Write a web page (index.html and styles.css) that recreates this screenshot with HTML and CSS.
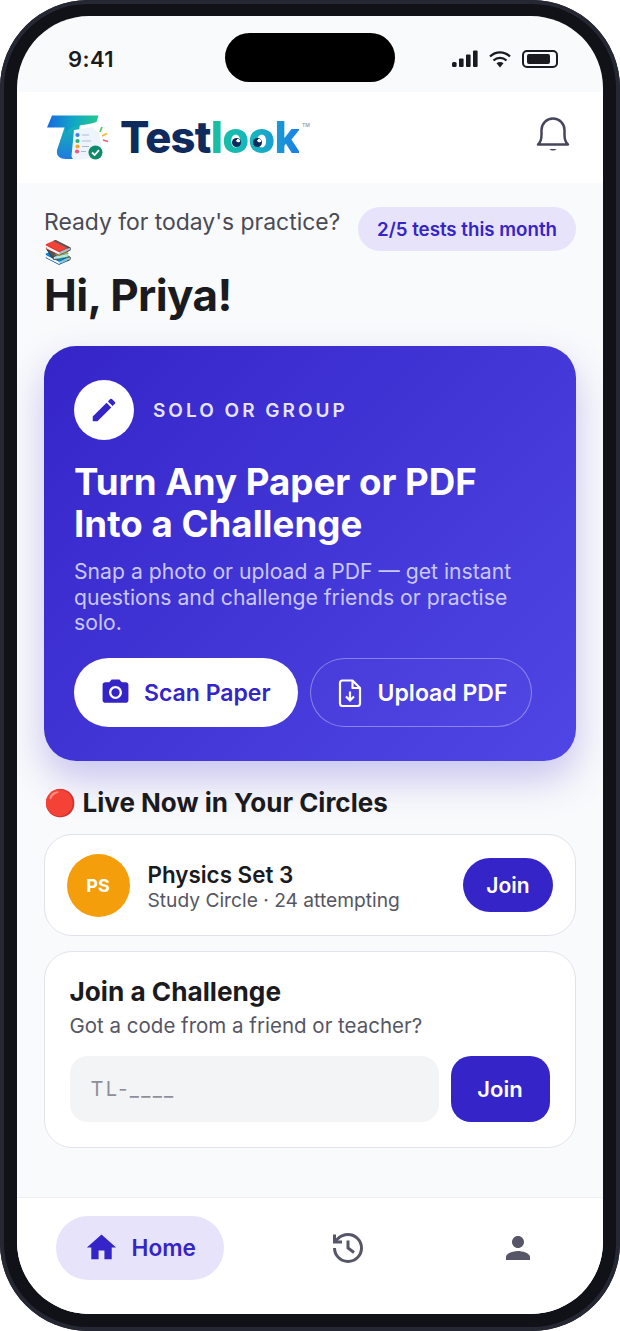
FILE: index.html
```html
<!DOCTYPE html>
<html lang="en">
<head>
<meta charset="utf-8">
<title>Testlook</title>
<link rel="stylesheet" href="styles.css">
</head>
<body>
<div class="phone">
  <div class="screen">
    <div class="island"></div>
    <div class="status">
      <span class="time">9:41</span>
      <div class="status-icons">
        <svg class="signal" viewBox="0 0 26 18"><rect x="0" y="12" width="4.6" height="5" rx="1.5"/><rect x="7" y="8.500" width="4.600" height="8.500" rx="1"/><rect x="14" y="4.500" width="4.600" height="12.500" rx="1"/><rect x="21" y="0.500" width="4.600" height="16.500" rx="1"/></svg>
        <svg class="wifi" viewBox="0 0 22 18"><path d="M1 6.500C6.800 1 15.200 1 21 6.500M4.500 10.500C8.300 7 13.700 7 17.500 10.500" fill="none" stroke="#1a1a1f" stroke-width="2.300"/><path d="M7.500 13.300 11 17.500l3.500-4.200c-2-1.700-5-1.700-7 0z" fill="#1a1a1f"/></svg>
        <div class="battery"><div class="battery-fill"></div></div>
      </div>
    </div>
    <header class="topbar">
      <div class="logo">
        <svg class="logo-mark" viewBox="46 114 66 48">
          <defs>
            <linearGradient id="tg" x1="0" y1="0" x2="1" y2="0"><stop offset="0" stop-color="#1769e0"/><stop offset=".5" stop-color="#12a5c8"/><stop offset="1" stop-color="#22c98c"/></linearGradient>
            <linearGradient id="sg" x1="0" y1="0" x2="0" y2="1"><stop offset="0" stop-color="#14b8b0"/><stop offset="1" stop-color="#1f7ae0"/></linearGradient>
          </defs>
          <path d="M65 126 57 150C56 156 60 159 66 159H75L80 124Z" fill="url(#sg)"/>
          <path d="M52 115.500H98.500L96.500 122C90 124.500 82 125 76 126 71 127 68 130 66 134L65 127.500H47Z" fill="url(#tg)"/>
          <path d="M74 130 92 127 99 133 102 151 100 157 76 160C73 160 72 158 71.500 156Z" fill="#eef4fc"/>
          <circle cx="77.500" cy="135" r="2.100" fill="#3b82e6"/><circle cx="77.500" cy="141" r="2.100" fill="#22b573"/><circle cx="77.500" cy="146.500" r="2.100" fill="#f5a623"/><circle cx="77" cy="151.500" r="2.100" fill="#ec5a7c"/>
          <path d="M82 135h7M82 141h9M82 146.500h7M81 151.500h5" stroke="#a9b9d3" stroke-width="1.200"/>
          <circle cx="95.500" cy="152.500" r="7" fill="#0d8a6a"/>
          <path d="M92 152.500l2.600 2.500 4.400-4.800" fill="none" stroke="#fff" stroke-width="1.800"/>
          <path d="M100 132l2-5" stroke="#58c46b" stroke-width="1.800"/><path d="M102 136l5-2.500" stroke="#f6b52e" stroke-width="1.800"/><path d="M103 140l5 1.500" stroke="#ef5b7a" stroke-width="1.800"/>
        </svg>
        <div class="wordmark"><span class="word-dark">Test</span><span class="word-grad">look</span><span class="eye eye-a"></span><span class="eye eye-b"></span><span class="tm">TM</span></div>
      </div>
      <svg class="bell" viewBox="0 0 36 38"><path d="M3 27.500c2.500-2 3.500-4.500 3.500-10V13a11.500 11.500 0 0 1 23 0v4.500c0 5.500 1 8 3.500 10z" fill="none" stroke="#46465a" stroke-width="2.500" stroke-linejoin="round"/><path d="M14.500 32a4 3 0 0 0 7 0z" fill="#46465a"/></svg>
    </header>
    <main class="content">
      <section class="greeting">
        <div class="greeting-text">
          <p class="ready">Ready for today's practice? <span class="emoji">📚</span></p>
          <h1 class="hello">Hi, Priya!</h1>
        </div>
        <span class="quota">2/5 tests this month</span>
      </section>
      <section class="hero">
        <div class="hero-top">
          <span class="hero-badge"><svg class="ico-pencil" viewBox="0 0 24 24"><path d="M3 17.250V21h3.750L17.810 9.940l-3.750-3.750L3 17.250zM20.710 7.040a1 1 0 0 0 0-1.410l-2.340-2.340a1 1 0 0 0-1.410 0l-1.830 1.830 3.750 3.750 1.830-1.830z"/></svg></span>
          <span class="eyebrow">SOLO OR GROUP</span>
        </div>
        <h2 class="hero-title">Turn Any Paper or PDF Into a Challenge</h2>
        <p class="hero-sub">Snap a photo or upload a PDF — get instant questions and challenge friends or practise solo.</p>
        <div class="hero-actions">
          <button class="btn btn-white"><svg class="ico-cam" viewBox="0 0 24 24"><path d="M12 15.200a3.200 3.200 0 1 0 0-6.400 3.200 3.200 0 0 0 0 6.400z"/><path d="M9 2 7.170 4H4c-1.100 0-2 .9-2 2v12c0 1.100.9 2 2 2h16c1.100 0 2-.9 2-2V6c0-1.100-.9-2-2-2h-3.170L15 2H9zm3 15c-2.760 0-5-2.240-5-5s2.240-5 5-5 5 2.240 5 5-2.240 5-5 5z"/></svg>Scan Paper</button>
          <button class="btn btn-ghost"><svg class="ico-file" viewBox="0 0 24 28"><path d="M4 1.500h10.500L22 9v15.500a2.500 2.500 0 0 1-2.500 2.500h-15A2.500 2.500 0 0 1 2 24.500V4A2.500 2.500 0 0 1 4 1.500zM14.500 1.500V9H22" fill="none" stroke="#fff" stroke-width="2.200" stroke-linejoin="round"/><path d="M12 12.500v8.500M8 17.500l4 4 4-4" fill="none" stroke="#fff" stroke-width="2.200"/></svg>Upload PDF</button>
        </div>
      </section>
      <h3 class="section-title"><span class="emoji">🔴</span> Live Now in Your Circles</h3>
      <section class="card live-card">
        <span class="avatar">PS</span>
        <div class="live-info">
          <div class="live-name">Physics Set 3</div>
          <div class="live-meta">Study Circle · 24 attempting</div>
        </div>
        <button class="join-small">Join</button>
      </section>
      <section class="card code-card">
        <div class="code-title">Join a Challenge</div>
        <div class="code-sub">Got a code from a friend or teacher?</div>
        <div class="code-row">
          <div class="code-input">TL-____</div>
          <button class="join-big">Join</button>
        </div>
      </section>
    </main>
    <nav class="tabbar">
      <div class="tab tab-active"><svg class="ico-home" viewBox="0 0 24 24"><path d="M10 20v-6h4v6h5v-8h3L12 3 2 12h3v8z"/></svg>Home</div>
      <div class="tab"><svg class="ico-nav" viewBox="0 0 24 24"><path d="M3 12a9 9 0 1 0 9-9 9.750 9.750 0 0 0-6.740 2.740L3 8" fill="none" stroke="#575668" stroke-width="2"/><path d="M3 3v5h5" fill="none" stroke="#575668" stroke-width="2"/><path d="M12 7v5l4 3" fill="none" stroke="#575668" stroke-width="2"/></svg></div>
      <div class="tab"><svg class="ico-nav" viewBox="0 0 24 24"><path fill="#575668" d="M12 12c2.210 0 4-1.790 4-4s-1.790-4-4-4-4 1.790-4 4 1.790 4 4 4zm0 2c-2.670 0-8 1.340-8 4v2h16v-2c0-2.660-5.330-4-8-4z"/></svg></div>
    </nav>
  </div>
</div>
</body>
</html>
```

FILE: styles.css
```css
* { box-sizing: border-box; }
html, body { margin: 0; padding: 0; background: #fff; }
body { font-family: Inter, "Noto Sans", sans-serif; width: 620px; height: 1331px; overflow: hidden; }
p, h1, h2, h3 { margin: 0; }
button { font-family: inherit; border: 0; cursor: pointer; }
svg { display: block; flex-shrink: 0; }

.phone {
  width: 620px; height: 1331px;
  background: #101218;
  border-radius: 88px;
  padding: 16px 17px 17px;
  box-shadow: inset 0 0 0 4px #252833;
}
.screen {
  position: relative;
  height: 100%;
  background: #f9fafc;
  border-radius: 72px;
  overflow: hidden;
  display: flex;
  flex-direction: column;
}
.island {
  position: absolute; left: 208px; top: 17px;
  width: 170px; height: 49px;
  background: #000; border-radius: 25px;
}
.status {
  height: 76px;
  padding: 9px 45px 0 51px;
  display: flex; align-items: center; justify-content: space-between;
  flex-shrink: 0;
}
.time { font-size: 22px; font-weight: 600; color: #1a1a1f; letter-spacing: .4px; }
.status-icons { display: flex; align-items: center; gap: 11px; }
.signal { width: 26px; height: 18px; fill: #1a1a1f; }
.wifi { width: 22px; height: 18px; }
.battery { width: 36px; height: 18px; border: 2px solid #1a1a1f; border-radius: 5px; padding: 2px 6px 2px 3px; }
.battery-fill { height: 100%; background: #1a1a1f; border-radius: 2px; }

.topbar {
  height: 91px; background: #fff; flex-shrink: 0;
  padding: 0 32px 0 29px;
  display: flex; align-items: center; justify-content: space-between;
}
.logo { display: flex; align-items: center; gap: 8px; }
.logo-mark { width: 66px; height: 48px; }
.wordmark { position: relative; margin-top: -2px; font-weight: 800; font-size: 43.5px; line-height: 48px; letter-spacing: -.8px; }
.word-dark { color: #0f2a5c; }
.word-grad { background: linear-gradient(90deg, #16c1a0 0%, #18b4c0 50%, #1a7fe8 100%); -webkit-background-clip: text; background-clip: text; color: transparent; }
.eye { position: absolute; width: 9px; height: 9px; border-radius: 50%; background: radial-gradient(circle at 68% 30%, #fff 0 18%, #0f2a5c 22%); top: 25px; }
.eye-a { left: 112px; }
.eye-b { left: 133px; }
.tm { position: absolute; left: 182px; top: 9px; font-size: 5px; line-height: 6px; font-weight: 500; color: #8a93a6; letter-spacing: 0; }
.bell { width: 36px; height: 38px; margin-top: -3px; }

.content { flex: 1; padding: 24px 27px 0; }
.greeting { display: flex; align-items: flex-start; gap: 14px; }
.greeting-text { flex: 1; min-width: 0; }
.ready { font-size: 22.9px; line-height: 30px; color: #4a4a55; }
.emoji { font-family: "Noto Color Emoji", sans-serif; }
.hello { font-size: 44px; line-height: 54px; font-weight: 700; color: #1a1a1f; letter-spacing: -.6px; }
.quota {
  flex-shrink: 0; height: 44px; padding: 0 19px;
  display: flex; align-items: center;
  background: #e7e3fa; color: #3525c8;
  border-radius: 22px; font-size: 18.7px; font-weight: 600;
}

.hero {
  margin-top: 24px;
  height: 415px;
  padding: 34px 30px;
  border-radius: 32px;
  background: linear-gradient(135deg, #3525c8 0%, #4f46e5 100%);
  box-shadow: 0 18px 38px rgba(53, 37, 200, .25);
  color: #fff;
}
.hero-top { display: flex; align-items: center; gap: 19px; }
.hero-badge { width: 60px; height: 60px; border-radius: 50%; background: #fff; display: flex; align-items: center; justify-content: center; }
.ico-pencil { width: 30px; height: 30px; fill: #3525c8; }
.eyebrow { font-size: 19px; font-weight: 600; letter-spacing: 3px; color: #e6e4fb; }
.hero-title { margin-top: 21px; font-size: 36.7px; line-height: 42px; font-weight: 700; }
.hero-sub { margin-top: 14px; font-size: 21.2px; line-height: 25.7px; color: #c9c8f5; }
.hero-actions { margin-top: 22px; display: flex; gap: 12px; }
.btn { height: 69px; padding-top: 1px; border-radius: 35px; display: flex; align-items: center; font-size: 23px; font-weight: 600; }
.btn-white { background: #fff; color: #3525c8; padding-left: 26px; padding-right: 27px; gap: 13px; }
.btn-ghost { background: rgba(255,255,255,.02); color: #fff; border: 1.5px solid rgba(255,255,255,.35); padding-left: 26px; padding-right: 24px; gap: 15px; }
.ico-cam { width: 31px; height: 31px; fill: #3525c8; }
.ico-file { width: 26px; height: 28px; }

.section-title { margin-top: 26px; font-size: 26px; line-height: 32px; font-weight: 700; color: #1a1a1f; }
.card { background: #fff; border: 1.5px solid #e2e2ea; border-radius: 28px; }
.live-card { margin-top: 15px; height: 102px; padding: 0 21px 0 21.5px; display: flex; align-items: center; gap: 18px; }
.avatar { width: 63px; height: 63px; border-radius: 50%; background: #f59e0b; color: #fff; font-size: 18px; font-weight: 700; display: flex; align-items: center; justify-content: center; flex-shrink: 0; }
.live-info { flex: 1; min-width: 0; padding-top: 2px; }
.live-name { font-size: 22.4px; line-height: 27px; font-weight: 600; color: #1a1a1f; }
.live-meta { font-size: 19.2px; line-height: 24px; color: #565663; }
.join-small { width: 90px; height: 54px; margin-right: 1px; border-radius: 27px; background: #3525c8; color: #fff; font-size: 21px; font-weight: 600; }
.code-card { margin-top: 15px; height: 197px; padding: 23px 24.5px 0; }
.code-title { font-size: 26.2px; line-height: 34px; font-weight: 700; color: #1a1a1f; }
.code-sub { margin-top: 1px; font-size: 20.5px; line-height: 32px; color: #565663; }
.code-row { margin-top: 14px; display: flex; gap: 12px; }
.code-input { width: 369px; height: 66px; padding: 0 21px; border-radius: 18px; background: #f3f4f6; color: #8e8e99; font-size: 20px; letter-spacing: 2.3px; display: flex; align-items: center; }
.join-big { width: 99px; height: 66px; border-radius: 20px; background: #3525c8; color: #fff; font-size: 22px; font-weight: 600; }

.tabbar {
  height: 117px; flex-shrink: 0; background: #fff;
  border-top: 1.5px solid #eeeef3;
  padding: 17.5px 39px 0;
  display: flex; align-items: flex-start; justify-content: space-between;
}
.tab { width: 92px; height: 64px; display: flex; align-items: center; justify-content: center; }
.tab-active { width: 168px; border-radius: 32px; background: #e7e3fa; color: #3525c8; font-size: 22.6px; font-weight: 600; gap: 12.5px; }
.ico-home { width: 35px; height: 35px; fill: #3525c8; }
.ico-nav { width: 36px; height: 36px; }
```
